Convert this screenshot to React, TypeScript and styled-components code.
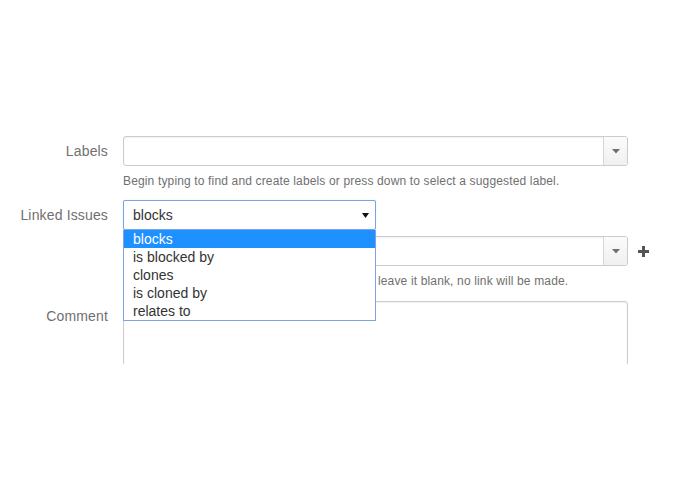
import React from 'react';
import styled, { createGlobalStyle } from 'styled-components';

const GlobalStyle = createGlobalStyle`
  html, body {
    margin: 0;
    padding: 0;
    background: #ffffff;
  }
  body {
    font-family: "Liberation Sans", Arial, sans-serif;
    color: #333333;
  }
`;

const linkTypes = ['blocks', 'is blocked by', 'clones', 'is cloned by', 'relates to'];

function ComboArrow() {
  return (
    <svg width="8" height="5" viewBox="0 0 8 5">
      <path d="M0 0 L8 0 L4 4.5 Z" fill="#707070" />
    </svg>
  );
}

function Combo() {
  return (
    <ComboBox>
      <ComboInput />
      <ComboButton>
        <ComboArrow />
      </ComboButton>
    </ComboBox>
  );
}

function App() {
  return (
    <>
      <GlobalStyle />
      <Viewport>
        <Form>
          <Row>
            <Label>Labels</Label>
            <Field>
              <Combo />
              <Help>Begin typing to find and create labels or press down to select a suggested label.</Help>
            </Field>
          </Row>

          <Row>
            <Label>Linked Issues</Label>
            <Field>
              <SelectWrap>
                <Select>
                  <span>blocks</span>
                  <svg width="7" height="5" viewBox="0 0 7 5">
                    <path d="M0 0 L7 0 L3.5 5 Z" fill="#111" />
                  </svg>
                </Select>
                <OptionList>
                  {linkTypes.map((t, i) => (
                    <Option key={t} $active={i === 0}>
                      {t}
                    </Option>
                  ))}
                </OptionList>
              </SelectWrap>
              <IssueLine>
                <Combo />
                <PlusButton>
                  <svg width="11" height="11" viewBox="0 0 11 11">
                    <path d="M4 0 H7 V4 H11 V7 H7 V11 H4 V7 H0 V4 H4 Z" fill="#555" />
                  </svg>
                </PlusButton>
              </IssueLine>
              <Help>Begin typing to search for issues to link. If you leave it blank, no link will be made.</Help>
            </Field>
          </Row>

          <Row $offset={1}>
            <Label>Comment</Label>
            <Field>
              <Comment />
            </Field>
          </Row>
        </Form>
      </Viewport>
    </>
  );
}

export default App;

const Viewport = styled.div`
  height: 364px;
  overflow: hidden;
`;

const Form = styled.div`
  padding-top: 136px;
  display: flex;
  flex-direction: column;
  gap: 11px;
`;

const Row = styled.div<{ $offset?: number }>`
  display: grid;
  grid-template-columns: 108px 505px;
  column-gap: 15px;
  align-items: start;
  margin-top: ${p => p.$offset ?? 0}px;
`;

const Label = styled.div`
  text-align: right;
  font-size: 14px;
  line-height: 18px;
  letter-spacing: 0.15px;
  padding-top: 6px;
  color: #707070;
`;

const Field = styled.div`
  display: flex;
  flex-direction: column;
`;

const ComboBox = styled.div`
  display: flex;
  width: 505px;
  height: 30px;
  box-sizing: border-box;
  border: 1px solid #cccccc;
  border-radius: 3px;
  box-shadow: inset 0 1px 2px rgba(0, 0, 0, 0.06);
  background: #ffffff;
  overflow: hidden;
`;

const ComboInput = styled.div`
  flex: 1;
`;

const ComboButton = styled.div`
  width: 23px;
  border-left: 1px solid #d6d6d6;
  background: linear-gradient(#fbfbfb, #f0f0f0);
  display: flex;
  align-items: center;
  justify-content: center;
`;

const Help = styled.div`
  font-size: 12px;
  line-height: 16px;
  letter-spacing: 0.15px;
  color: #707070;
  margin-top: 7px;
`;

const SelectWrap = styled.div`
  position: relative;
  width: 253px;
`;

const Select = styled.div`
  height: 30px;
  box-sizing: border-box;
  border: 1px solid #7ea3e0;
  border-radius: 2px;
  padding: 0 6px 0 9px;
  display: flex;
  align-items: center;
  justify-content: space-between;
  font-size: 14px;
  color: #333333;
  background: #ffffff;
  box-shadow: 0 0 1px rgba(80, 130, 220, 0.4);
`;

const OptionList = styled.div`
  position: absolute;
  top: 30px;
  left: 0;
  width: 253px;
  box-sizing: border-box;
  border: 1px solid #7ea3e0;
  border-top: none;
  background: #ffffff;
  z-index: 2;
`;

const Option = styled.div<{ $active: boolean }>`
  height: 18px;
  line-height: 18px;
  font-size: 14px;
  padding-left: 9px;
  color: ${p => (p.$active ? '#ffffff' : '#333333')};
  background: ${p => (p.$active ? '#1e90ff' : '#ffffff')};
`;

const IssueLine = styled.div`
  display: flex;
  align-items: center;
  margin-top: 6px;
  width: 540px;
`;

const PlusButton = styled.div`
  margin-left: 10px;
  display: flex;
  align-items: center;
`;

const Comment = styled.div`
  width: 505px;
  height: 120px;
  box-sizing: border-box;
  border: 1px solid #cccccc;
  border-radius: 3px;
  box-shadow: inset 0 1px 2px rgba(0, 0, 0, 0.06);
`;
